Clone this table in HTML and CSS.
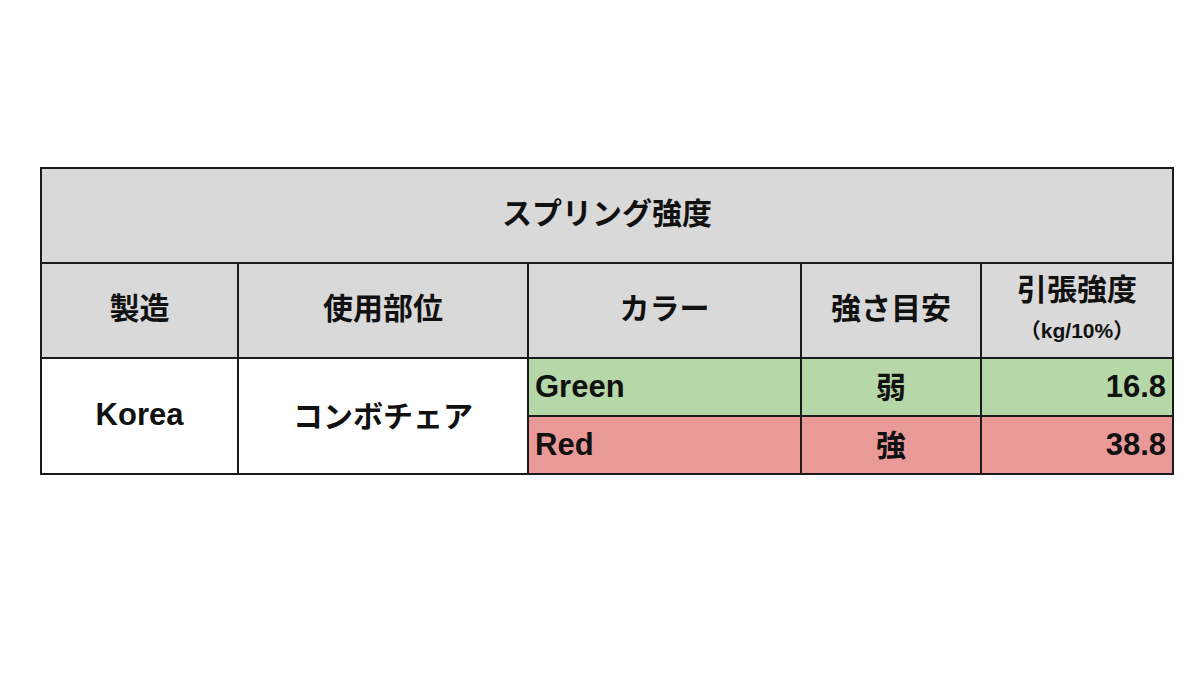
FILE: index.html
```html
<!DOCTYPE html>
<html lang="ja">
<head>
<meta charset="utf-8">
<title>スプリング強度</title>
<link rel="stylesheet" href="styles.css">
</head>
<body>
<div class="page">
  <table class="spec">
    <colgroup>
      <col class="c1"><col class="c2"><col class="c3"><col class="c4"><col class="c5">
    </colgroup>
    <thead>
      <tr class="title-row"><th colspan="5">スプリング強度</th></tr>
      <tr class="head-row">
        <th>製造</th>
        <th>使用部位</th>
        <th>カラー</th>
        <th>強さ目安</th>
        <th class="two-line"><span class="main">引張強度</span><span class="unit">（kg/10%）</span></th>
      </tr>
    </thead>
    <tbody>
      <tr class="data green">
        <td rowspan="2" class="plain latin">Korea</td>
        <td rowspan="2" class="plain cjk">コンボチェア</td>
        <td class="left">Green</td>
        <td class="center cjk">弱</td>
        <td class="right">16.8</td>
      </tr>
      <tr class="data red">
        <td class="left">Red</td>
        <td class="center cjk">強</td>
        <td class="right">38.8</td>
      </tr>
    </tbody>
  </table>
</div>
</body>
</html>
```
FILE: styles.css
```css
html, body {
  margin: 0;
  padding: 0;
  background: #ffffff;
}
.page {
  padding: 167px 0 0 40px;
}
.spec {
  border-collapse: collapse;
  table-layout: fixed;
  width: 1132px;
  font-family: "Liberation Sans", "Noto Sans CJK JP", Arial, sans-serif;
  font-weight: bold;
  color: #111;
}
.c1 { width: 197px; }
.c2 { width: 290px; }
.c3 { width: 273px; }
.c4 { width: 180px; }
.c5 { width: 192px; }
.spec th, .spec td {
  border: 2px solid #1a1a1a;
  padding: 0 6px;
  vertical-align: middle;
  font-weight: bold;
}
.spec th {
  background: #d9d9d9;
  font-size: 30px;
  text-align: center;
  padding-bottom: 10px;
}
.title-row th { height: 83px; }
.head-row th { height: 83px; }
.spec th.two-line { padding-bottom: 4px; }
.two-line .main {
  display: block;
  line-height: 36px;
}
.two-line .unit {
  display: block;
  font-size: 21px;
  line-height: 30px;
  padding-top: 8px;
}
.data td {
  height: 56px;
  font-size: 31px;
}
.data td.cjk {
  font-size: 30px;
  padding-bottom: 4px;
  height: 52px;
}
.plain {
  background: #ffffff;
  text-align: center;
}
.plain.latin { padding-bottom: 2px; }
.plain.cjk { padding-bottom: 6px; }
.green td.left, .green td.center, .green td.right { background: #b6d7a8; }
.red td.left, .red td.center, .red td.right { background: #ea9999; }
.left { text-align: left; }
.center { text-align: center; }
.right { text-align: right; }
```
